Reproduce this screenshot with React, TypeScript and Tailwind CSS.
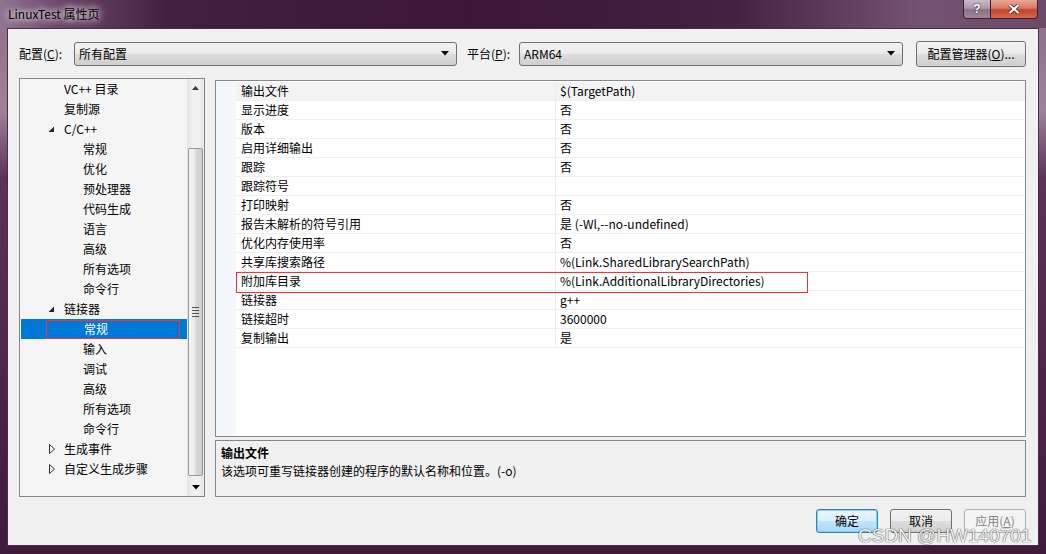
import React from "react";

const font = { fontFamily: '"Noto Sans CJK SC", "Liberation Sans", sans-serif' };

const treeItems: { label: string; level: number; arrow?: "open" | "closed"; selected?: boolean }[] = [
  { label: "VC++ 目录", level: 0 },
  { label: "复制源", level: 0 },
  { label: "C/C++", level: 0, arrow: "open" },
  { label: "常规", level: 1 },
  { label: "优化", level: 1 },
  { label: "预处理器", level: 1 },
  { label: "代码生成", level: 1 },
  { label: "语言", level: 1 },
  { label: "高级", level: 1 },
  { label: "所有选项", level: 1 },
  { label: "命令行", level: 1 },
  { label: "链接器", level: 0, arrow: "open" },
  { label: "常规", level: 1, selected: true },
  { label: "输入", level: 1 },
  { label: "调试", level: 1 },
  { label: "高级", level: 1 },
  { label: "所有选项", level: 1 },
  { label: "命令行", level: 1 },
  { label: "生成事件", level: 0, arrow: "closed" },
  { label: "自定义生成步骤", level: 0, arrow: "closed" },
];

const props: [string, string][] = [
  ["输出文件", "$(TargetPath)"],
  ["显示进度", "否"],
  ["版本", "否"],
  ["启用详细输出", "否"],
  ["跟踪", "否"],
  ["跟踪符号", ""],
  ["打印映射", "否"],
  ["报告未解析的符号引用", "是 (-Wl,--no-undefined)"],
  ["优化内存使用率", "否"],
  ["共享库搜索路径", "%(Link.SharedLibrarySearchPath)"],
  ["附加库目录", "%(Link.AdditionalLibraryDirectories)"],
  ["链接器", "g++"],
  ["链接超时", "3600000"],
  ["复制输出", "是"],
];

const DownArrow = () => (
  <svg width="8" height="5" viewBox="0 0 8 5">
    <polygon points="0,0 8,0 4,4.5" fill="#000" />
  </svg>
);

const Dropdown = ({ value, width }: { value: string; width: string }) => (
  <div
    className={`${width} h-[24px] flex items-center justify-between pl-[4px] pr-[7px] rounded-[3px] border border-[#707070] bg-[linear-gradient(180deg,#f2f2f2_0%,#ebebeb_50%,#dddddd_51%,#cfcfcf_100%)]`}
  >
    <span className="text-[12px] leading-[16px] text-black">{value}</span>
    <DownArrow />
  </div>
);

const TreeArrow = ({ kind }: { kind: "open" | "closed" }) =>
  kind === "open" ? (
    <svg width="7" height="7" viewBox="0 0 7 7">
      <polygon points="6,0.5 6,6 0.5,6" fill="#262626" />
    </svg>
  ) : (
    <svg width="6" height="10" viewBox="0 0 6 10">
      <polygon points="0.5,0.5 5.5,5 0.5,9.5" fill="none" stroke="#333" strokeWidth="1" />
    </svg>
  );

const Scrollbar = () => (
  <div className="w-[17px] h-full flex flex-col bg-[linear-gradient(90deg,#e3e3e3_0%,#f0f0f0_30%,#f0f0f0_70%,#e6e6e6_100%)]">
    <div className="h-[17px] flex items-center justify-center">
      <svg width="7" height="4" viewBox="0 0 7 4">
        <polygon points="0,4 7,4 3.5,0" fill="#3a3a3a" />
      </svg>
    </div>
    <div className="h-[52px]" />
    <div className="h-[328px] mx-[1px] rounded-[2px] border border-[#979797] bg-[linear-gradient(90deg,#f5f5f5_0%,#e9e9e9_45%,#d6d6d6_55%,#cfcfcf_100%)] flex items-center justify-center">
      <div className="flex flex-col gap-[2px]">
        <div className="w-[7px] h-[1px] bg-[#555]" />
        <div className="w-[7px] h-[1px] bg-[#555]" />
        <div className="w-[7px] h-[1px] bg-[#555]" />
        <div className="w-[7px] h-[1px] bg-[#555]" />
      </div>
    </div>
    <div className="h-[3px]" />
    <div className="h-[17px] flex items-center justify-center">
      <DownArrow />
    </div>
  </div>
);

const Tree = () => (
  <div className="w-[186px] h-full border border-[#828790] bg-[#f5f5f5] flex">
    <div className="flex-1 relative">
      {treeItems.map((item, i) => (
        <div
          key={i}
          className={`h-[20px] flex items-center ${item.selected ? "bg-[#0078d7] ml-[1px]" : ""}`}
        >
          <div className={`${item.level === 0 ? "w-[44px]" : "w-[63px]"} ${item.selected ? "w-[62px]" : ""} flex justify-end pr-[9px] shrink-0`}>
            {item.arrow && <TreeArrow kind={item.arrow} />}
          </div>
          <span className={`text-[12px] leading-[16px] ${item.selected ? "text-white" : "text-black"}`}>
            {item.label}
          </span>
        </div>
      ))}
      <div className="absolute left-[26px] top-[241px] w-[134px] h-[19px] border border-[#e8383d]" />
    </div>
    <Scrollbar />
  </div>
);

const Grid = () => (
  <div className="h-[357px] border border-[#828790] bg-white flex">
    <div className="w-[20px] bg-[#f4f7fc]" />
    <div className="flex-1 relative pt-[1px]">
      {props.map(([k, v], i) => (
        <div
          key={i}
          className={`h-[19px] flex border-b border-[#f0f0f0] ${i === 0 ? "bg-[#f3f3f3]" : ""}`}
        >
          <div className="w-[320px] pl-[5px] flex items-center border-r border-[#ececec] text-[12px] leading-[16px] text-black">
            {k}
          </div>
          <div className="flex-1 pl-[4px] flex items-center text-[12px] leading-[16px] text-black">
            {v}
          </div>
        </div>
      ))}
      <div className="absolute left-[0px] top-[191px] w-[572px] h-[21px] border border-[#e8383d]" />
    </div>
  </div>
);

const Button = ({
  children,
  kind = "normal",
  width = "w-[62px]",
  height = "h-[24px]",
}: {
  children: React.ReactNode;
  kind?: "normal" | "default" | "disabled";
  width?: string;
  height?: string;
}) => {
  const styles =
    kind === "default"
      ? "border-[#3c7fb1] bg-[linear-gradient(180deg,#eaf6fd_0%,#d9f0fc_50%,#bee6fd_51%,#a7d9f5_100%)] text-black shadow-[inset_0_0_0_1px_#7fd2f6]"
      : kind === "disabled"
      ? "border-[#adb2b5] bg-[#f4f4f4] text-[#838383]"
      : "border-[#707070] bg-[linear-gradient(180deg,#f2f2f2_0%,#ebebeb_50%,#dddddd_51%,#cfcfcf_100%)] text-black";
  return (
    <div
      className={`${width} ${height} rounded-[3px] border flex items-center justify-center text-[12px] leading-[16px] ${styles}`}
    >
      {children}
    </div>
  );
};

export default function App() {
  return (
    <div
      style={font}
      className="w-[1046px] h-[554px] relative flex flex-col overflow-hidden bg-[linear-gradient(180deg,#8a6c86_0%,#9d839a_20%,#5a3457_32%,#3e1a3b_100%)]"
    >
      {/* title bar */}
      <div className="h-[28px] flex items-start bg-[linear-gradient(90deg,#8f7590_0%,#6a4667_6%,#43203f_16%,#3b1637_45%,#44213f_70%,#735470_88%,#6a4a66_100%)]">
        <span className="ml-[8px] mt-[6px] text-[12px] leading-[16px] text-black [text-shadow:0_0_6px_#fff,0_0_10px_#fff]">
          LinuxTest 属性页
        </span>
        <div className="ml-auto mr-[8px] flex">
          <div className="w-[28px] h-[19px] rounded-bl-[4px] border border-t-0 border-[#3a2236] bg-[linear-gradient(180deg,#c9bac7_0%,#ae98ab_45%,#8a7087_55%,#9e879b_100%)] flex items-center justify-center">
            <span className="text-white text-[12px] leading-[12px] font-bold [text-shadow:0_0_2px_#000]" style={{ fontFamily: '"Liberation Sans", sans-serif' }}>
              ?
            </span>
          </div>
          <div className="w-[47px] h-[19px] rounded-br-[4px] border border-l-0 border-t-0 border-[#3a2236] bg-[linear-gradient(180deg,#e8a896_0%,#d77a63_45%,#c4432a_55%,#d6684a_100%)] flex items-center justify-center">
            <svg width="12" height="10" viewBox="0 0 12 10">
              <path d="M1.5 1 L10.5 9 M10.5 1 L1.5 9" stroke="#5a1a10" strokeWidth="3.6" />
              <path d="M1.5 1 L10.5 9 M10.5 1 L1.5 9" stroke="#fff" strokeWidth="2.2" />
            </svg>
          </div>
        </div>
      </div>

      {/* client area */}
      <div className="flex-1 mx-[7px] mb-[8px] bg-[#f0f0f0] border border-[#4a2d47] flex flex-col pl-[11px] pr-[12px] pt-[12px] pb-[12px]">
        <div className="h-[25px] flex items-center">
          <span className="w-[55px] text-[12px] leading-[16px] text-black">
            配置(<u>C</u>):
          </span>
          <Dropdown value="所有配置" width="w-[383px]" />
          <span className="ml-[10px] w-[52px] text-[12px] leading-[16px] text-black">
            平台(<u>P</u>):
          </span>
          <Dropdown value="ARM64" width="w-[384px]" />
          <div className="ml-auto">
            <Button width="w-[110px]" height="h-[26px]">
              配置管理器(<u>O</u>)...
            </Button>
          </div>
        </div>

        <div className="mt-[12px] h-[419px] flex gap-[10px]">
          <Tree />
          <div className="flex-1 flex flex-col">
            <div className="mt-[2px]">
              <Grid />
            </div>
            <div className="mt-[3px] h-[57px] border border-[#828790] bg-[#f0f0f0] pl-[5px] pt-[3px]">
              <div className="text-[12px] leading-[18px] font-bold text-black">输出文件</div>
              <div className="text-[12px] leading-[18px] text-black">
                该选项可重写链接器创建的程序的默认名称和位置。(-o)
              </div>
            </div>
          </div>
        </div>

        <div className="mt-[12px] h-[24px] flex justify-end gap-[12px]">
          <Button kind="default">确定</Button>
          <Button>取消</Button>
          <Button kind="disabled">
            应用(<u>A</u>)
          </Button>
        </div>
      </div>

      {/* watermark */}
      <div
        className="absolute left-[858px] top-[525px] text-[19px] leading-[22px] text-[#f4f4f4] [text-shadow:0_0_1px_#444,0_0_1px_#444]"
        style={{ fontFamily: '"Liberation Sans", sans-serif' }}
      >
        CSDN @HW140701
      </div>
    </div>
  );
}
